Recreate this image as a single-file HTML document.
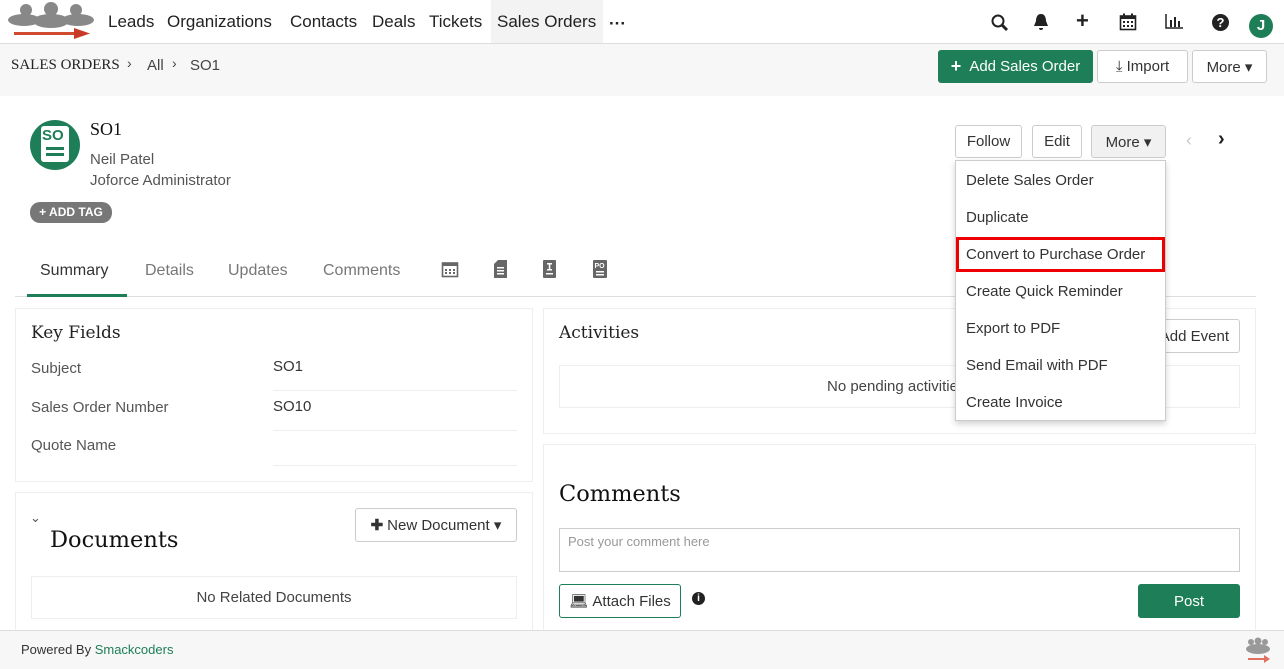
<!DOCTYPE html>
<html><head><meta charset="utf-8"><style>
*{box-sizing:border-box;margin:0;padding:0}
body{width:1284px;height:669px;overflow:hidden;background:#fff;font-family:"Liberation Sans",sans-serif;color:#333;position:relative;font-size:15px}
.a{position:absolute}
.nav a{position:absolute;top:12px;font-size:17px;color:#222}
.btn{position:absolute;border:1px solid #ccc;border-radius:3px;background:#fff;font-size:15px;color:#333;display:flex;align-items:center;justify-content:center}
.slab{font-family:"DejaVu Serif","Liberation Serif",serif}
.card{position:absolute;border:1px solid #eee;background:#fff}
.lbl{position:absolute;color:#555;font-size:15px}
.menu div{height:37px;line-height:37px;padding-left:10px;font-size:15px;color:#333}
</style></head><body>
<div class="a" style="left:0;top:0;width:1284px;height:44px;border-bottom:1px solid #ddd;background:#fff"></div>
<svg class="a" style="left:4px;top:2px" width="94" height="38" viewBox="0 0 94 38">
<circle cx="22" cy="8" r="6" fill="#888"/><circle cx="47" cy="7" r="7" fill="#888"/><circle cx="72" cy="8" r="6" fill="#888"/>
<ellipse cx="20" cy="18" rx="16" ry="6" fill="#888"/><ellipse cx="74" cy="18" rx="16" ry="6" fill="#888"/><ellipse cx="47" cy="19" rx="18" ry="7" fill="#888"/>
<rect x="10" y="30" width="66" height="3" fill="#d04a30"/><polygon points="70,26 86,31.5 70,37" fill="#c83a25"/></svg>
<div class="a" style="left:491px;top:0;width:112px;height:43px;background:#f3f3f3"></div>
<div class="nav"><a style="left:108px">Leads</a><a style="left:167px">Organizations</a><a style="left:290px">Contacts</a><a style="left:372px">Deals</a><a style="left:429px">Tickets</a><a style="left:497px">Sales Orders</a><a style="left:609px;top:14px;font-weight:bold">···</a></div>
<svg class="a" style="left:990px;top:13px" width="20" height="20" viewBox="0 0 20 20"><circle cx="8" cy="8" r="5.5" fill="none" stroke="#222" stroke-width="2"/><line x1="12" y1="12" x2="17" y2="17" stroke="#222" stroke-width="3"/></svg>
<svg class="a" style="left:1033px;top:13px" width="16" height="18" viewBox="0 0 16 18"><path d="M8 1C4 1 3 5 3 8L1 13H15L13 8C13 5 12 1 8 1Z M6 15a2 2 0 004 0Z" fill="#222"/></svg>
<div class="a" style="left:1076px;top:8px;font-size:22px;font-weight:bold;color:#222">+</div>
<svg class="a" style="left:1119px;top:13px" width="18" height="18" viewBox="0 0 18 18"><rect x="1.5" y="3" width="15" height="13.5" fill="none" stroke="#222" stroke-width="1.6"/><rect x="1.5" y="3" width="15" height="3" fill="#222"/><rect x="4" y="0.5" width="2" height="4" fill="#222"/><rect x="12" y="0.5" width="2" height="4" fill="#222"/><g fill="#222"><rect x="4" y="8" width="2" height="2"/><rect x="8" y="8" width="2" height="2"/><rect x="12" y="8" width="2" height="2"/><rect x="4" y="12" width="2" height="2"/><rect x="8" y="12" width="2" height="2"/><rect x="12" y="12" width="2" height="2"/></g></svg>
<svg class="a" style="left:1165px;top:14px" width="18" height="15" viewBox="0 0 18 15"><path d="M1 0V14H18" fill="none" stroke="#222" stroke-width="1.5"/><rect x="5" y="6" width="2" height="7" fill="#222"/><rect x="9" y="3" width="2" height="10" fill="#222"/><rect x="13" y="7" width="2" height="6" fill="#222"/></svg>
<div class="a" style="left:1212px;top:14px;width:17px;height:17px;border-radius:50%;background:#222;color:#fff;font-size:13px;font-weight:bold;text-align:center;line-height:17px">?</div>
<div class="a" style="left:1249px;top:14px;width:24px;height:24px;border-radius:50%;background:#1e7e57;color:#fff;font-size:15px;font-weight:bold;text-align:center;line-height:24px">J</div>
<div class="a" style="left:0;top:44px;width:1284px;height:52px;background:#f7f7f7"></div>
<div class="a" style="left:11px;top:57px;color:#222;font-family:'Liberation Serif',serif;font-size:15px">SALES ORDERS</div>
<div class="a" style="left:127px;top:55px;font-size:14px;color:#444">›</div>
<div class="a" style="left:147px;top:57px;font-size:15px;color:#444">All</div>
<div class="a" style="left:172px;top:55px;font-size:14px;color:#444">›</div>
<div class="a" style="left:190px;top:57px;font-size:15px;color:#444">SO1</div>
<div class="btn" style="left:938px;top:50px;width:155px;height:33px;background:#1e7e57;border-color:#1e7e57;color:#fff"><b style="font-size:18px;margin-right:8px">+</b>Add Sales Order</div>
<div class="btn" style="left:1097px;top:50px;width:91px;height:33px">⤓&nbsp;Import</div>
<div class="btn" style="left:1192px;top:50px;width:75px;height:33px">More ▾</div>
<div class="a" style="left:30px;top:120px;width:50px;height:50px;border-radius:50%;background:#1e7e57"></div>
<div class="a" style="left:41px;top:126px;width:28px;height:36px;background:#fff;border-radius:3px"></div>
<div class="a" style="left:42px;top:127px;font-size:15px;font-weight:bold;color:#1e7e57">SO</div>
<div class="a" style="left:46px;top:147px;width:18px;height:3px;background:#1e7e57"></div>
<div class="a" style="left:46px;top:153px;width:18px;height:3px;background:#1e7e57"></div>
<div class="a" style="left:90px;top:119px;font-size:18px;color:#111;font-family:'Liberation Serif',serif">SO1</div>
<div class="a" style="left:90px;top:151px;font-size:15px;color:#555">Neil Patel</div>
<div class="a" style="left:90px;top:172px;font-size:15px;color:#555">Joforce Administrator</div>
<div class="a" style="left:30px;top:202px;width:82px;height:21px;border-radius:10px;background:#777;color:#fff;font-size:12px;font-weight:bold;text-align:center;line-height:21px">+ ADD TAG</div>
<div class="btn" style="left:955px;top:125px;width:67px;height:33px">Follow</div>
<div class="btn" style="left:1032px;top:125px;width:50px;height:33px">Edit</div>
<div class="btn" style="left:1091px;top:125px;width:75px;height:33px;background:#f1f1f1">More ▾</div>
<div class="a" style="left:1186px;top:130px;font-size:18px;color:#ccc">‹</div>
<div class="a" style="left:1218px;top:128px;font-size:20px;color:#222;font-weight:bold">›</div>
<div class="a" style="left:15px;top:296px;width:1241px;height:1px;background:#ddd"></div>
<div class="a" style="left:27px;top:294px;width:100px;height:3px;background:#1e7e57"></div>
<div class="a" style="left:40px;top:262px;font-size:16px;color:#333">Summary</div>
<div class="a" style="left:145px;top:262px;font-size:16px;color:#777">Details</div>
<div class="a" style="left:228px;top:262px;font-size:16px;color:#777">Updates</div>
<div class="a" style="left:323px;top:262px;font-size:16px;color:#777">Comments</div>
<svg class="a" style="left:441px;top:260px" width="18" height="18" viewBox="0 0 18 18"><rect x="1.5" y="3" width="15" height="13.5" fill="none" stroke="#666" stroke-width="1.6"/><rect x="1.5" y="3" width="15" height="3" fill="#666"/><g fill="#666"><rect x="4" y="9" width="2" height="2"/><rect x="8" y="9" width="2" height="2"/><rect x="12" y="9" width="2" height="2"/><rect x="4" y="12" width="2" height="2"/><rect x="8" y="12" width="2" height="2"/><rect x="12" y="12" width="2" height="2"/></g></svg>
<svg class="a" style="left:494px;top:260px" width="13" height="18" viewBox="0 0 13 18"><path d="M4 0H13V18H0V4Z" fill="#666"/><g fill="#fff"><rect x="3" y="7" width="7" height="1.5"/><rect x="3" y="10" width="7" height="1.5"/><rect x="3" y="13" width="7" height="1.5"/></g></svg>
<svg class="a" style="left:543px;top:260px" width="13" height="18" viewBox="0 0 13 18"><rect width="13" height="18" rx="1" fill="#666"/><g fill="#fff"><rect x="4" y="3" width="5" height="1.5"/><rect x="5.8" y="3" width="1.5" height="7"/><rect x="4" y="9" width="5" height="1.5"/><rect x="3" y="13" width="7" height="1.5"/></g></svg>
<svg class="a" style="left:593px;top:260px" width="14" height="18" viewBox="0 0 14 18"><rect width="14" height="18" rx="1" fill="#666"/><text x="1.5" y="8" font-size="7" font-weight="bold" fill="#fff" font-family="Liberation Sans">PO</text><rect x="3" y="11" width="8" height="1.5" fill="#fff"/><rect x="3" y="14" width="8" height="1.5" fill="#fff"/></svg>
<div class="card" style="left:15px;top:308px;width:518px;height:174px"></div>
<div class="a slab" style="left:31px;top:323px;font-size:17px;color:#222">Key Fields</div>
<div class="lbl" style="left:31px;top:360px">Subject</div>
<div class="a" style="left:273px;top:358px;font-size:15px">SO1</div>
<div class="a" style="left:273px;top:390px;width:244px;height:1px;background:#eee"></div>
<div class="lbl" style="left:31px;top:399px">Sales Order Number</div>
<div class="a" style="left:273px;top:398px;font-size:15px">SO10</div>
<div class="a" style="left:273px;top:430px;width:244px;height:1px;background:#eee"></div>
<div class="lbl" style="left:31px;top:437px">Quote Name</div>
<div class="a" style="left:273px;top:465px;width:244px;height:1px;background:#eee"></div>
<div class="card" style="left:15px;top:492px;width:518px;height:150px"></div>
<div class="a" style="left:30px;top:510px;font-size:13px;color:#555">⌄</div>
<div class="a slab" style="left:50px;top:527px;font-size:22.5px;color:#111">Documents</div>
<div class="btn" style="left:355px;top:508px;width:162px;height:34px"><b style="margin-right:4px">✚</b>New Document ▾</div>
<div class="a" style="left:31px;top:576px;width:486px;height:43px;border:1px solid #eee;text-align:center;line-height:42px;color:#444">No Related Documents</div>
<div class="card" style="left:543px;top:308px;width:713px;height:126px"></div>
<div class="a slab" style="left:559px;top:323px;font-size:17px;color:#222">Activities</div>
<div class="btn" style="left:1140px;top:319px;width:100px;height:34px;justify-content:flex-end;padding-right:10px">Add Event</div>
<div class="a" style="left:559px;top:365px;width:681px;height:43px;border:1px solid #eee;line-height:42px;color:#444;padding-left:267px">No pending activities</div>
<div class="card" style="left:543px;top:444px;width:713px;height:200px"></div>
<div class="a slab" style="left:559px;top:481px;font-size:22.5px;color:#111">Comments</div>
<div class="a" style="left:559px;top:528px;width:681px;height:44px;border:1px solid #ccc;padding:5px 8px;font-size:13px;color:#999">Post your comment here</div>
<div class="btn" style="left:559px;top:584px;width:122px;height:34px;border-color:#1e7e57">💻&#xFE0E;&nbsp;Attach Files</div>
<div class="a" style="left:692px;top:592px;width:13px;height:13px;border-radius:50%;background:#222;color:#fff;font-size:10px;font-weight:bold;text-align:center;line-height:13px">i</div>
<div class="btn" style="left:1138px;top:584px;width:102px;height:34px;background:#1e7e57;border-color:#1e7e57;color:#fff">Post</div>
<div class="a menu" style="left:955px;top:160px;width:211px;height:261px;background:#fff;border:1px solid #ccc;box-shadow:0 3px 6px rgba(0,0,0,.18);padding-top:1px">
<div>Delete Sales Order</div><div>Duplicate</div><div style="outline:3px solid #e00;outline-offset:-4px;margin:0 -1px;padding-left:11px">Convert to Purchase Order</div><div>Create Quick Reminder</div><div>Export to PDF</div><div>Send Email with PDF</div><div>Create Invoice</div></div>
<div class="a" style="left:0;top:630px;width:1284px;height:39px;background:#f7f7f7;border-top:1px solid #ddd"></div>
<div class="a" style="left:21px;top:642px;font-size:13px;color:#333">Powered By <span style="color:#1e7e57">Smackcoders</span></div>
<svg class="a" style="left:1244px;top:636px" width="28" height="28" viewBox="0 0 28 28"><circle cx="7" cy="6" r="3" fill="#999"/><circle cx="14" cy="5" r="3.5" fill="#999"/><circle cx="21" cy="6" r="3" fill="#999"/><ellipse cx="14" cy="13" rx="12" ry="5" fill="#999"/><rect x="4" y="22" width="18" height="2" fill="#e07060"/><polygon points="20,19 26,23 20,27" fill="#e07060"/></svg>
</body></html>
